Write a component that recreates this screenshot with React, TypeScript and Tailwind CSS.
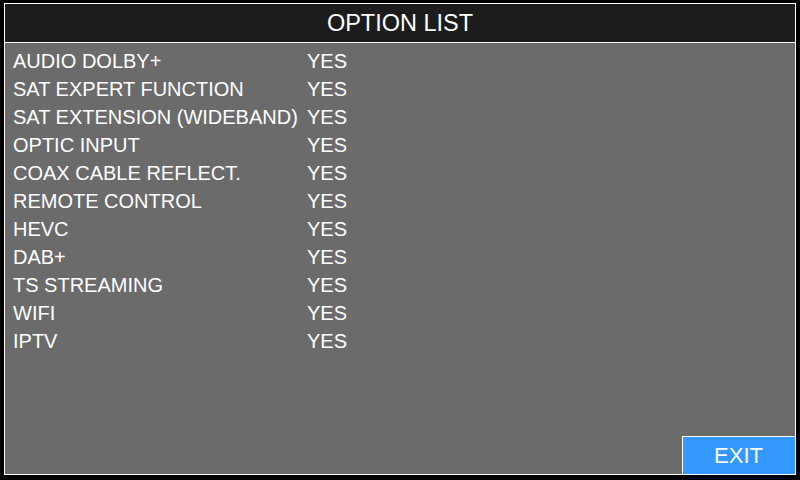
import React from "react";

const options = [
    "AUDIO DOLBY+",
    "SAT EXPERT FUNCTION",
    "SAT EXTENSION (WIDEBAND)",
    "OPTIC INPUT",
    "COAX CABLE REFLECT.",
    "REMOTE CONTROL",
    "HEVC",
    "DAB+",
    "TS STREAMING",
    "WIFI",
    "IPTV",
];

const App = () => {
    return (
        <div
            className="h-[480px] w-[800px] bg-black pl-[4px] pt-[3px] text-white"
            style={{ fontFamily: '"Liberation Sans", Arial, sans-serif' }}
        >
            <div className="flex h-[472px] w-[792px] flex-col border border-white">
                <div className="flex h-[39px] shrink-0 items-center justify-center border-b border-white bg-[#1c1c1c] pt-px text-[23.5px] leading-none">
                    OPTION LIST
                </div>
                <div className="flex flex-1 flex-col bg-[#6b6b6b]">
                    <div className="flex flex-col pl-[8px] pt-[4px]">
                        {options.map((name) => (
                            <div
                                key={name}
                                className="flex h-[28px] items-center text-[20px] leading-none"
                            >
                                <span className="w-[294px]">{name}</span>
                                <span>YES</span>
                            </div>
                        ))}
                    </div>
                    <div className="mt-auto flex justify-end">
                        <button className="flex h-[38px] w-[113px] items-center justify-center border-l border-t border-white bg-[#3399ff] pr-px pt-px text-[22px] leading-none text-white">
                            EXIT
                        </button>
                    </div>
                </div>
            </div>
        </div>
    );
};

export default App;
